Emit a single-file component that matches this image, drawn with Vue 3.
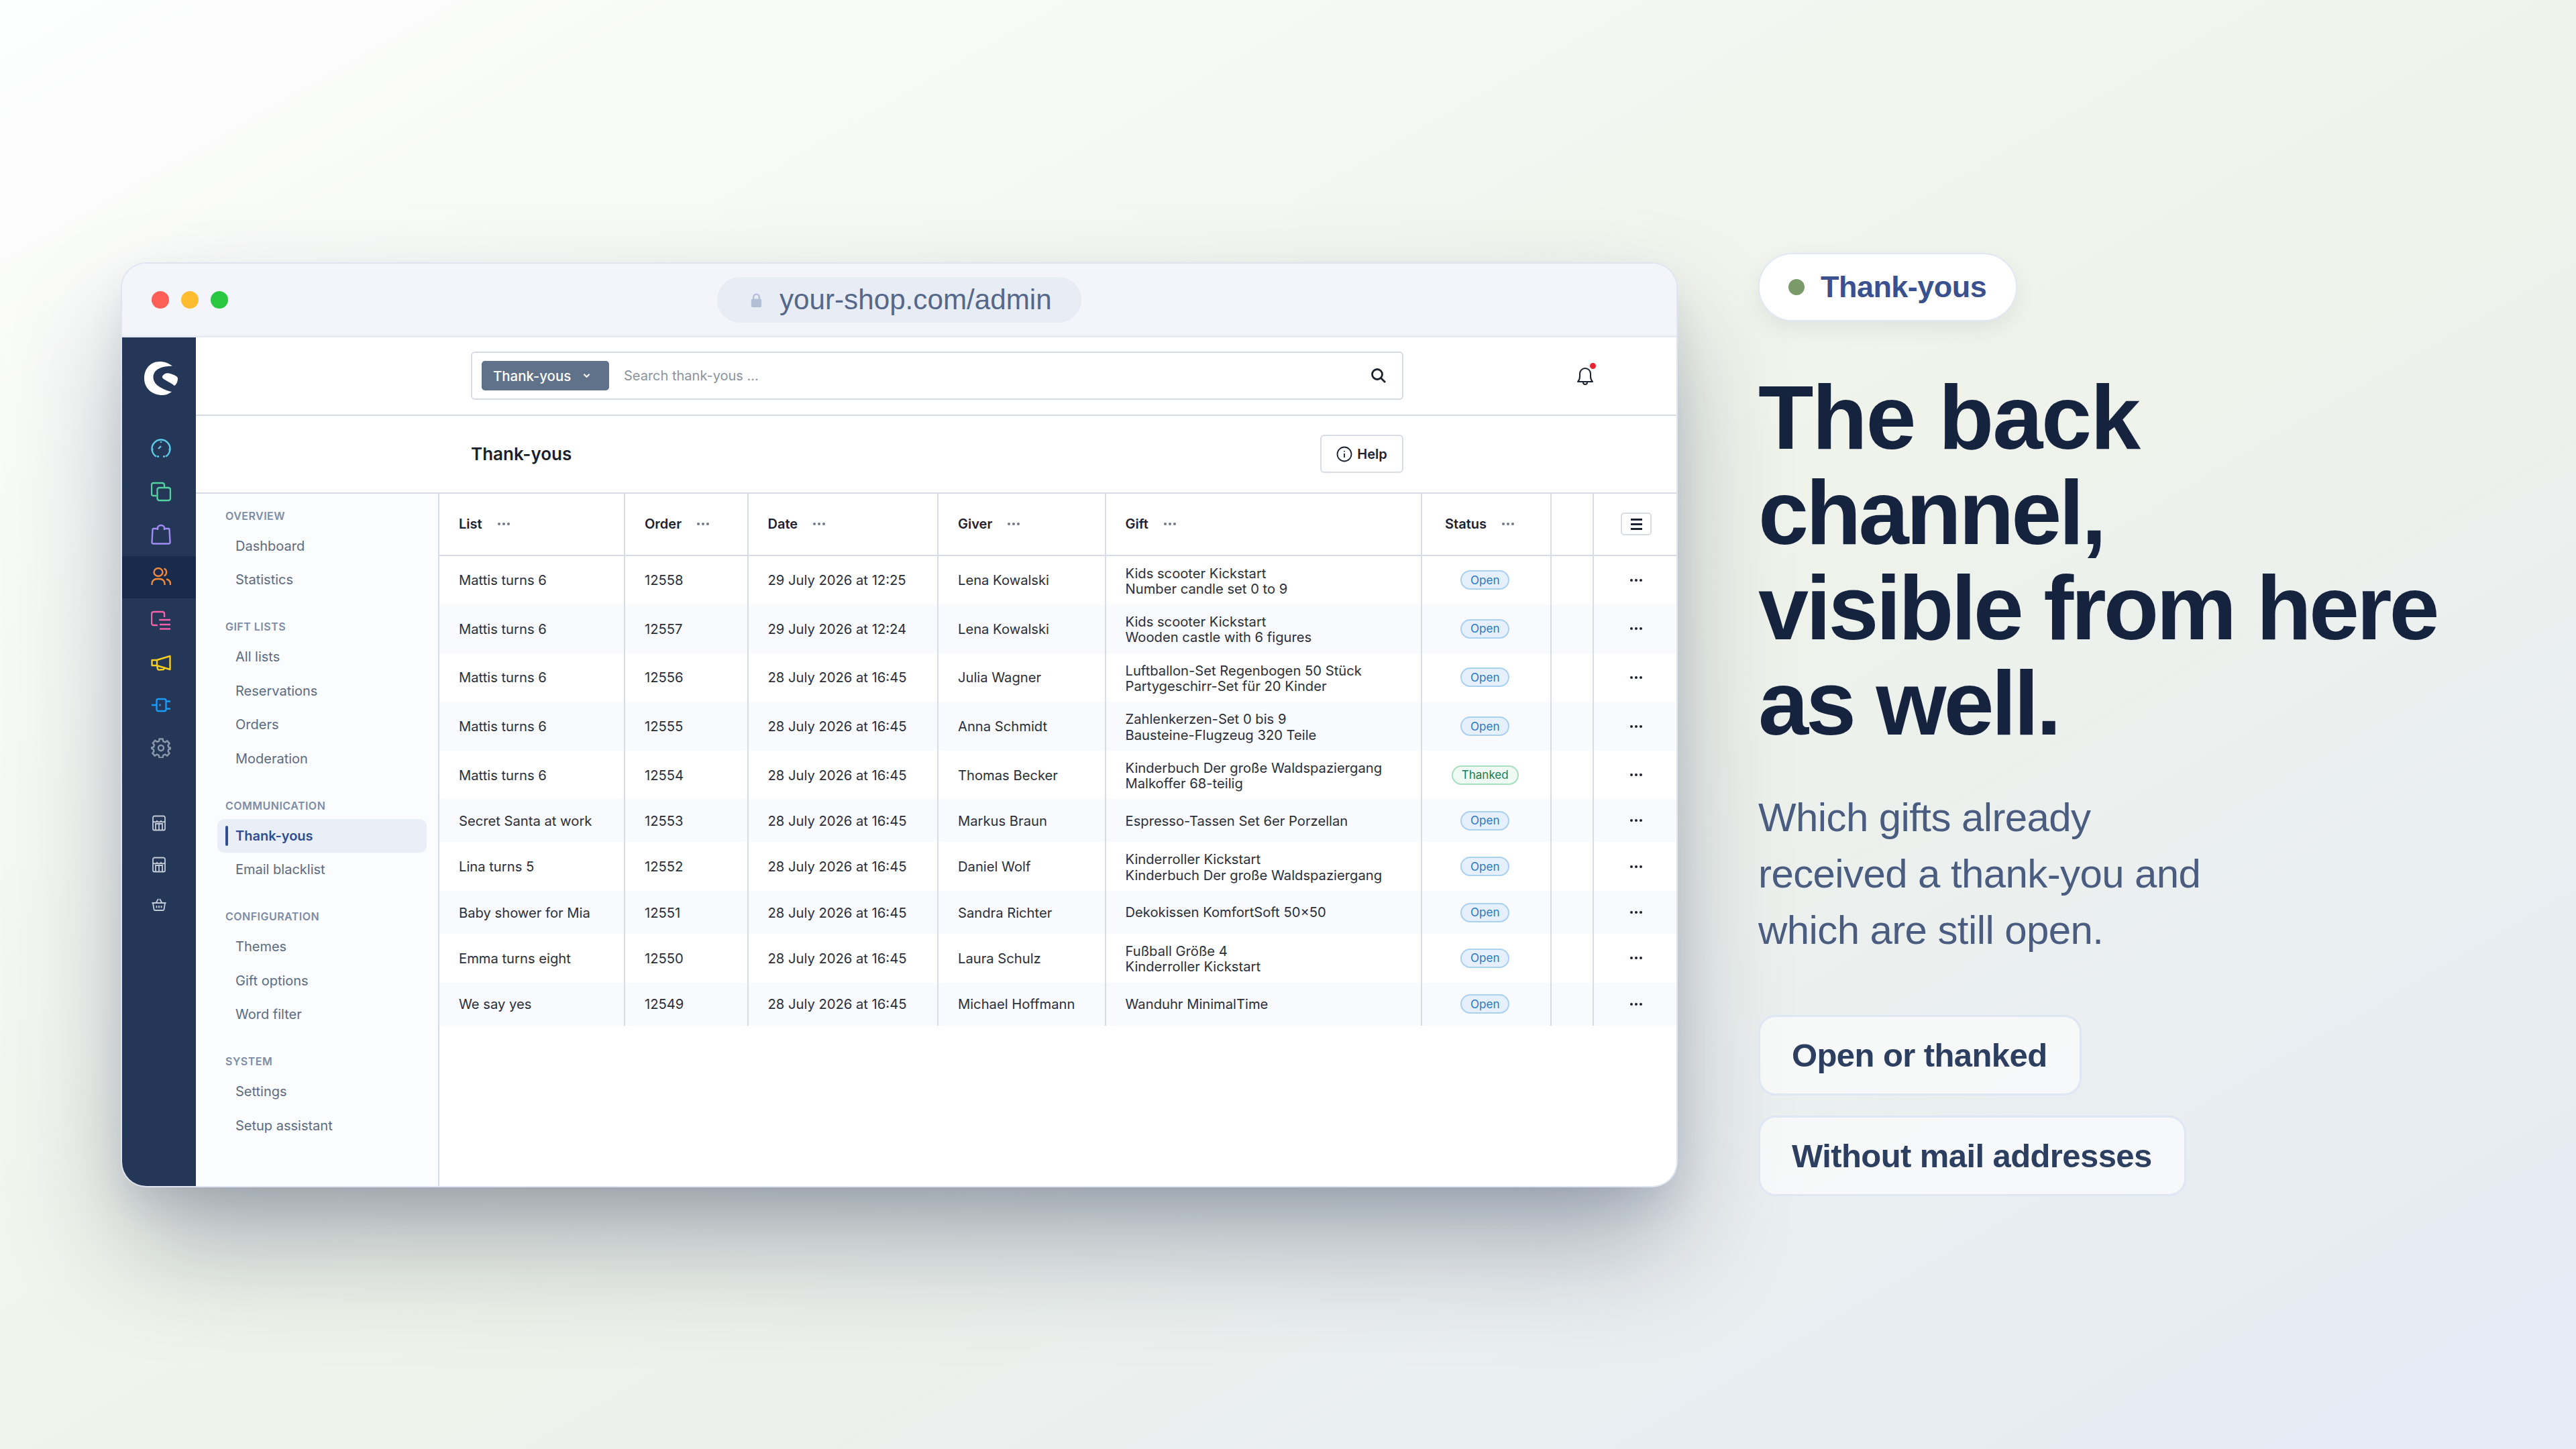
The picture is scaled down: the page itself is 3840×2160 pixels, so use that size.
<script setup>
const navGroups = [
  { title: "Overview", items: ["Dashboard", "Statistics"] },
  { title: "Gift lists", items: ["All lists", "Reservations", "Orders", "Moderation"] },
  { title: "Communication", items: ["Thank-yous", "Email blacklist"] },
  { title: "Configuration", items: ["Themes", "Gift options", "Word filter"] },
  { title: "System", items: ["Settings", "Setup assistant"] },
];

const columns = ["List", "Order", "Date", "Giver", "Gift", "Status"];

const rows = [
  { list: "Mattis turns 6", order: 12558, date: "29 July 2026 at 12:25", giver: "Lena Kowalski", gift: ["Kids scooter Kickstart", "Number candle set 0 to 9"], status: "Open" },
  { list: "Mattis turns 6", order: 12557, date: "29 July 2026 at 12:24", giver: "Lena Kowalski", gift: ["Kids scooter Kickstart", "Wooden castle with 6 figures"], status: "Open" },
  { list: "Mattis turns 6", order: 12556, date: "28 July 2026 at 16:45", giver: "Julia Wagner", gift: ["Luftballon-Set Regenbogen 50 Stück", "Partygeschirr-Set für 20 Kinder"], status: "Open" },
  { list: "Mattis turns 6", order: 12555, date: "28 July 2026 at 16:45", giver: "Anna Schmidt", gift: ["Zahlenkerzen-Set 0 bis 9", "Bausteine-Flugzeug 320 Teile"], status: "Open" },
  { list: "Mattis turns 6", order: 12554, date: "28 July 2026 at 16:45", giver: "Thomas Becker", gift: ["Kinderbuch Der große Waldspaziergang", "Malkoffer 68-teilig"], status: "Thanked" },
  { list: "Secret Santa at work", order: 12553, date: "28 July 2026 at 16:45", giver: "Markus Braun", gift: ["Espresso-Tassen Set 6er Porzellan"], status: "Open" },
  { list: "Lina turns 5", order: 12552, date: "28 July 2026 at 16:45", giver: "Daniel Wolf", gift: ["Kinderroller Kickstart", "Kinderbuch Der große Waldspaziergang"], status: "Open" },
  { list: "Baby shower for Mia", order: 12551, date: "28 July 2026 at 16:45", giver: "Sandra Richter", gift: ["Dekokissen KomfortSoft 50×50"], status: "Open" },
  { list: "Emma turns eight", order: 12550, date: "28 July 2026 at 16:45", giver: "Laura Schulz", gift: ["Fußball Größe 4", "Kinderroller Kickstart"], status: "Open" },
  { list: "We say yes", order: 12549, date: "28 July 2026 at 16:45", giver: "Michael Hoffmann", gift: ["Wanduhr MinimalTime"], status: "Open" },
];
</script>

<template>
  <div class="stage">
    <div class="window">
      <div class="titlebar">
        <div class="lights">
          <span class="light red" />
          <span class="light amber" />
          <span class="light green" />
        </div>
        <div class="url">
          <svg class="lock" viewBox="0 0 18 24" fill="none">
            <path d="M4.5 11V7a4.5 4.5 0 0 1 9 0v4" stroke="#b2bdd6" stroke-width="2.4" />
            <rect x="1" y="10" width="16" height="13" rx="2" fill="#b2bdd6" />
          </svg>
          <span>your-shop.com/admin</span>
        </div>
        <div />
      </div>

      <div class="app">
        <aside class="rail">
          <svg class="logo" viewBox="0 0 70 70" fill="#fff">
            <path d="M52 13.5C44 8 38 7 33 7 19 7 10 18 10 32c0 15 12 25 27 25 5 0 10-2 14-5-9-2-17-5.500-23-11-4.500-5-6-11-3-17 3-6 11-10 27-10.500z" />
            <path d="M37 29c2-4 7-6 12-4 6 2 11 4 11 7 0 5-2 9-5 11-5-4-11-7-16-10-1.500-1-2.500-2.500-2-4z" />
          </svg>

          <div class="rail-nav">
            <div class="rail-item">
              <svg viewBox="0 0 30 30" fill="none" stroke="#5ccbe8">
                <path d="M8 26.500A13.500 13.500 0 1 1 22 26.500" />
                <path d="M12 26.500H9M18 26.500h3M11 15l4-3.800M15 4v2M1.500 16h2M26.500 16h2" />
              </svg>
            </div>
            <div class="rail-item">
              <svg viewBox="0 0 30 30" fill="none" stroke="#52d2a0">
                <path d="M8 21H3.500A2.500 2.500 0 0 1 1 18.500V4.500A2.500 2.500 0 0 1 3.500 2H17a3 3 0 0 1 3 3v4" />
                <rect x="9.500" y="9" width="19.500" height="19" rx="3" />
              </svg>
            </div>
            <div class="rail-item">
              <svg viewBox="0 0 30 30" fill="none" stroke="#a18cf5">
                <path d="M10 6H4a1.500 1.500 0 0 0-1.500 1.500L1.500 26a2 2 0 0 0 2 2.500h23a2 2 0 0 0 2-2.500L27.500 7.500A1.500 1.500 0 0 0 26 6H20" />
                <path d="M10 8V5a5 4 0 0 1 10 0v3" />
              </svg>
            </div>
            <div class="rail-item active">
              <svg viewBox="0 0 30 30" fill="none" stroke="#f58a3c">
                <ellipse cx="11" cy="8" rx="6.500" ry="6" />
                <path d="M1.500 27v-2a7 7 0 0 1 7-7h5a7 7 0 0 1 7 7v2" />
                <path d="M19.500 2.500a6 6 0 0 1 0 11M23 18.500a6.500 6.500 0 0 1 6 6.500v2" />
              </svg>
            </div>
            <div class="rail-item">
              <svg viewBox="0 0 30 30" fill="none" stroke="#f45fa7">
                <path d="M18 3H4a3 3 0 0 0-3 3v14a3 3 0 0 0 3 3h6" />
                <path d="M18 3a3 3 0 0 1 2 3v5M12 15h17M13 22h16M13 28.500h16" />
              </svg>
            </div>
            <div class="rail-item">
              <svg viewBox="0 0 30 30" fill="none" stroke="#f7ce1b" stroke-linejoin="round">
                <path d="M1.500 11v8h7l20 6V5l-20 6z" />
                <path d="M9 11v8M9 19l1 5a2 2 0 0 0 2.500 1.500l6-.5a2 2 0 0 0 1-3" />
              </svg>
            </div>
            <div class="rail-item">
              <svg viewBox="0 0 30 30" fill="none" stroke="#1c9bf5">
                <path d="M1 15h7.500M22 9.500h7M22 20.500h7" />
                <path d="M11 6h9a2.500 2.500 0 0 1 2.500 2.500v13A2.500 2.500 0 0 1 20 24h-9a2.500 2.500 0 0 1-2.500-2.500v-13A2.500 2.500 0 0 1 11 6z" />
                <path d="M13.500 13.500v3" />
              </svg>
            </div>
            <div class="rail-item">
              <svg viewBox="0 0 30 30" fill="none" stroke="#8b98aa">
                <circle cx="15" cy="15" r="4" />
                <path d="M12.500 1.500h5l.8 3.700 2.800 1.200 3.200-2 3.300 3.800-2.100 3 .9 2.800 3.600 1.100v.8l-3.600 1.100-.9 2.800 2.100 3-3.300 3.800-3.200-2-2.800 1.200-.8 3.700h-5l-.8-3.700-2.800-1.200-3.200 2-3.300-3.800 2.100-3-.9-2.800L.5 15.400v-.8l3.600-1.100.9-2.800-2.100-3 3.300-3.800 3.200 2 2.800-1.200z" />
              </svg>
            </div>
          </div>

          <div class="rail-shops">
            <svg v-for="n in 2" :key="n" viewBox="0 0 24 24" fill="none" stroke="#c3cbd8">
              <path d="M3 9V4a2.500 2.500 0 0 1 2.500-2.500h13A2.500 2.500 0 0 1 21 4v5" />
              <path d="M3 9v11.500A2 2 0 0 0 5 22.500h14a2 2 0 0 0 2-2V9" />
              <path d="M3 9c1.500 2 4.500 2 6 0 1.500 2 4.500 2 6 0 1.500 2 4.500 2 6 0" />
              <path d="M7 22.500V13h10v9.500M12 13v9.500" />
            </svg>
            <svg viewBox="0 0 24 24" fill="none" stroke="#c3cbd8">
              <path d="M1.500 11h21M3 11l1.500 9.500a2 2 0 0 0 2 1.500h11a2 2 0 0 0 2-1.500L21 11" />
              <path d="M7.500 11 11 5M16.500 11 13 5M8.500 15v3.500M12 15v3.500M15.500 15v3.500" />
            </svg>
          </div>
        </aside>

        <div class="main">
          <header class="topbar">
            <div class="search">
              <span class="search-tag">
                Thank-yous
                <svg viewBox="0 0 12 8" fill="none" stroke="#fff" stroke-width="2.200">
                  <path d="M1.500 1.500 6 6l4.500-4.500" />
                </svg>
              </span>
              <span class="search-text">Search thank-yous ...</span>
              <svg class="search-icon" viewBox="0 0 24 24" fill="none" stroke="#1c2130" stroke-width="2.800">
                <circle cx="10" cy="10" r="7.500" />
                <path d="m15.500 15.500 6.500 6.500" />
              </svg>
            </div>
            <div class="bell">
              <svg viewBox="0 0 28 32" fill="none" stroke="#1c2130" stroke-width="2">
                <path d="M3 25c2-2 3-4 3-8v-4a8 8 0 0 1 16 0v4c0 4 1 6 3 8z" stroke-linejoin="round" />
                <path d="M11 26a3 3 0 0 0 6 0" />
              </svg>
              <span class="bell-dot" />
            </div>
          </header>

          <section class="pagehead">
            <div class="pagehead-inner">
              <h2>Thank-yous</h2>
              <button class="help">
                <svg viewBox="0 0 24 24" fill="none" stroke="#1c2130" stroke-width="1.800">
                  <circle cx="12" cy="12" r="10.500" />
                  <path d="M12 11v6M12 7v1.500" />
                </svg>
                Help
              </button>
            </div>
          </section>

          <div class="body">
            <nav class="subnav">
              <div v-for="group in navGroups" :key="group.title" class="group">
                <div class="group-title">{{ group.title }}</div>
                <a
                  v-for="item in group.items"
                  :key="item"
                  class="group-item"
                  :class="{ current: item === 'Thank-yous' }"
                >
                  {{ item }}
                </a>
              </div>
            </nav>

            <div class="table">
              <div class="row head">
                <div v-for="col in columns" :key="col" class="cell">
                  {{ col }}
                  <span class="dots"><i /><i /><i /></span>
                </div>
                <div class="cell" />
                <div class="cell end">
                  <span class="columns-btn"><i /><i /><i /></span>
                </div>
              </div>
              <div v-for="row in rows" :key="row.order" class="row">
                <div class="cell">{{ row.list }}</div>
                <div class="cell">{{ row.order }}</div>
                <div class="cell">{{ row.date }}</div>
                <div class="cell">{{ row.giver }}</div>
                <div class="cell gift">
                  <div v-for="line in row.gift" :key="line">{{ line }}</div>
                </div>
                <div class="cell status">
                  <span class="pill" :class="row.status.toLowerCase()">{{ row.status }}</span>
                </div>
                <div class="cell" />
                <div class="cell end">
                  <span class="dots dark"><i /><i /><i /></span>
                </div>
              </div>
            </div>
          </div>
        </div>
      </div>
    </div>

    <div class="copy">
      <div class="eyebrow"><span class="eyebrow-dot" />Thank-yous</div>
      <h1><span class="loose">The back</span><br />channel,<br />visible from here<br />as well.</h1>
      <p>Which gifts already received a thank-you and which are still open.</p>
      <div class="chips">
        <span class="chip">Open or thanked</span>
        <span class="chip">Without mail addresses</span>
      </div>
    </div>
  </div>
</template>

<style>
html,
body {
  margin: 0;
}
</style>

<style scoped>
.stage {
  width: 3840px;
  height: 2160px;
  box-sizing: border-box;
  padding-left: 182px;
  display: flex;
  align-items: center;
  gap: 122px;
  overflow: hidden;
  background: linear-gradient(150deg, #fdfefe 0%, #eff3ea 52%, #e5eaf6 100%);
  font-family: "Liberation Sans", Arial, sans-serif;
}

.window {
  flex: none;
  width: 2317px;
  height: 1375px;
  display: flex;
  flex-direction: column;
  border-radius: 36px;
  overflow: hidden;
  background: #fff;
  box-shadow:
    0 0 0 2px #dfe5f2,
    0 30px 60px -10px rgba(20, 36, 70, 0.12),
    0 90px 170px -10px rgba(20, 36, 70, 0.34);
  font-family: Inter, "Liberation Sans", sans-serif;
}

.titlebar {
  flex: none;
  height: 110px;
  box-sizing: border-box;
  padding: 2px 44px 0;
  display: grid;
  grid-template-columns: 1fr auto 1fr;
  align-items: center;
  background: #f3f5fa;
  border-bottom: 3px solid #e6eaf3;
}

.lights {
  display: flex;
  gap: 18px;
}

.light {
  width: 26px;
  height: 26px;
  border-radius: 50%;
}

.red {
  background: #ff5f57;
}

.amber {
  background: #febc2e;
}

.green {
  background: #28c840;
}

.url {
  width: 543px;
  height: 68px;
  box-sizing: border-box;
  padding-left: 50px;
  display: flex;
  align-items: center;
  gap: 26px;
  border-radius: 34px;
  background: #e8ecf5;
  color: #55688a;
  font-family: "Liberation Sans", Arial, sans-serif;
  font-size: 42.2px;
}

.lock {
  width: 17px;
  height: 23px;
}

.app {
  flex: 1;
  min-height: 0;
  display: flex;
}

.rail {
  flex: none;
  width: 110px;
  background: #243757;
}

.logo {
  display: block;
  width: 70px;
  height: 70px;
  margin: 29px 0 0 23px;
}

.rail-nav {
  margin-top: 36px;
}

.rail-item {
  height: 63.7px;
  padding-left: 6px;
  display: flex;
  align-items: center;
  justify-content: center;
}

.rail-item svg {
  width: 30px;
  height: 30px;
  stroke-width: 2.4;
}

.rail-item.active {
  background: #192b4d;
}

.rail-shops {
  margin-top: 68px;
  display: flex;
  flex-direction: column;
  align-items: center;
}

.rail-shops svg {
  width: 24px;
  height: 24px;
  stroke-width: 1.8;
  margin-bottom: 38px;
}

.rail-shops svg:nth-child(2) {
  margin-bottom: 34px;
}

.main {
  flex: 1;
  min-width: 0;
  display: flex;
  flex-direction: column;
}

.topbar {
  flex: none;
  height: 117px;
  box-sizing: border-box;
  padding-left: 410px;
  display: flex;
  align-items: center;
  border-bottom: 2px solid #d8dce4;
}

.search {
  width: 1390px;
  height: 72px;
  box-sizing: border-box;
  padding: 0 23px 0 14px;
  display: flex;
  align-items: center;
  border: 2px solid #d8dce4;
  border-radius: 6px;
}

.search-tag {
  width: 190px;
  height: 44px;
  box-sizing: border-box;
  padding-left: 17px;
  display: flex;
  align-items: center;
  gap: 18px;
  border-radius: 5px;
  background: #5f7289;
  color: #fff;
  font-size: 20.4px;
  font-weight: 500;
}

.search-tag svg {
  width: 11px;
  height: 8px;
}

.search-text {
  margin-left: 22px;
  flex: 1;
  color: #8a93a0;
  font-size: 20px;
}

.search-icon {
  width: 24px;
  height: 24px;
}

.bell {
  position: relative;
  width: 28px;
  height: 32px;
  margin-left: 257px;
}

.bell svg {
  display: block;
  width: 28px;
  height: 32px;
}

.bell-dot {
  position: absolute;
  top: -3px;
  right: -2px;
  width: 9px;
  height: 9px;
  border-radius: 50%;
  background: #e8222e;
}

.pagehead {
  flex: none;
  height: 116px;
  box-sizing: border-box;
  padding-left: 410px;
  display: flex;
  align-items: center;
  border-bottom: 2px solid #d8dce4;
}

.pagehead-inner {
  width: 1390px;
  display: flex;
  align-items: center;
  justify-content: space-between;
}

h2 {
  margin: 0;
  color: #1a1f2b;
  font-size: 26px;
  font-weight: 600;
}

.help {
  width: 124px;
  height: 57px;
  padding: 0;
  display: flex;
  align-items: center;
  justify-content: center;
  gap: 7px;
  border: 2px solid #d8dce4;
  border-radius: 6px;
  background: #fff;
  color: #1c2130;
  font-family: inherit;
  font-size: 20px;
  font-weight: 600;
}

.help svg {
  width: 24px;
  height: 24px;
}

.body {
  flex: 1;
  min-height: 0;
  display: flex;
}

.subnav {
  flex: none;
  width: 363px;
  box-sizing: border-box;
  padding: 23px 17px 0 32px;
  background: #fbfcfe;
  border-right: 2px solid #d8dce4;
}

.group {
  margin-bottom: 34px;
}

.group-title {
  height: 20px;
  margin-bottom: 10px;
  padding-left: 12px;
  color: #7b8ca6;
  font-size: 16px;
  line-height: 20px;
  font-weight: 600;
  letter-spacing: 0.03em;
  text-transform: uppercase;
}

.group-item {
  display: block;
  height: 50.700px;
  box-sizing: border-box;
  padding-left: 27px;
  color: #5a6b82;
  font-size: 20px;
  line-height: 50.700px;
}

.group-item.current {
  position: relative;
  border-radius: 10px;
  background: #eaeff7;
  color: #2f4d90;
  font-weight: 600;
}

.group-item.current::before {
  content: "";
  position: absolute;
  left: 12px;
  top: 10px;
  bottom: 10px;
  width: 4px;
  border-radius: 2px;
  background: #2f4d90;
}

.table {
  flex: 1;
  min-width: 0;
  color: #2a2f3a;
  font-size: 20.2px;
}

.row {
  display: grid;
  grid-template-columns: 277px 183.500px 283.500px 249.500px 471.500px 192.500px 63.500px 1fr;
}

.row:nth-child(odd):not(.head) {
  background: #f9fafe;
}

.head {
  height: 93px;
  border-bottom: 2px solid #d8dce4;
  box-sizing: border-box;
  font-weight: 600;
  font-size: 20px;
  color: #1c2130;
}

.cell {
  min-height: 64px;
  box-sizing: border-box;
  padding: 0 30px 0 29px;
  display: flex;
  align-items: center;
  border-right: 2px solid #d8dce4;
}

.gift {
  display: block;
  align-self: stretch;
  padding-top: 14px;
  padding-bottom: 12px;
  line-height: 23.300px;
}

.gift:has(> :only-child) {
  display: flex;
  padding-top: 0;
  padding-bottom: 0;
}

.status {
  padding: 0 3px 0 0;
  justify-content: center;
}

.head .cell:nth-child(6) {
  padding-left: 34px;
}

.end {
  padding: 0 0 0 3px;
  justify-content: center;
  border-right: 0;
}

.dots {
  margin-left: 23px;
  display: inline-flex;
  gap: 3px;
}

.dots i {
  width: 4px;
  height: 4px;
  border-radius: 50%;
  background: #6d7684;
}

.dots.dark {
  margin-left: 0;
}

.dots.dark i {
  background: #1c2130;
}

.columns-btn {
  width: 46px;
  height: 34px;
  box-sizing: border-box;
  display: flex;
  flex-direction: column;
  align-items: center;
  justify-content: center;
  gap: 4px;
  border: 2px solid #d8dce4;
  border-radius: 5px;
}

.columns-btn i {
  width: 17px;
  height: 3px;
  background: #1c2130;
}

.pill {
  height: 29px;
  box-sizing: border-box;
  padding: 0 13px;
  display: flex;
  align-items: center;
  border: 2px solid #a9d1f2;
  border-radius: 15px;
  background: #e6f0fc;
  color: #1f78c8;
  font-size: 17px;
}

.pill.thanked {
  border-color: #a7e0bf;
  background: #eefaf3;
  color: #1a7a4c;
}

.copy {
  flex: none;
  width: 1060px;
}

.eyebrow {
  width: fit-content;
  height: 102px;
  box-sizing: border-box;
  padding: 0 44px 0 43px;
  display: flex;
  align-items: center;
  gap: 24px;
  border: 2px solid #e1e7f3;
  border-radius: 51px;
  background: #fff;
  box-shadow: 0 12px 30px rgba(30, 50, 90, 0.08);
  color: #3a5190;
  font-size: 45px;
  font-weight: 700;
  letter-spacing: -0.012em;
}

.eyebrow-dot {
  width: 24px;
  height: 24px;
  border-radius: 50%;
  background: #7a9a6a;
}

h1 {
  margin: 73px 0 0;
  color: #15233f;
  font-size: 135px;
  line-height: 142px;
  font-weight: 700;
  letter-spacing: -0.03em;
}

.loose {
  letter-spacing: -0.016em;
}

p {
  margin: 57px 0 0;
  width: 720px;
  color: #4a5d80;
  font-size: 60px;
  line-height: 84px;
  letter-spacing: -0.01em;
}

.chips {
  margin-top: 84px;
  display: flex;
  flex-direction: column;
  align-items: flex-start;
  gap: 30px;
}

.chip {
  height: 120px;
  box-sizing: border-box;
  padding: 0 48px 0 47px;
  display: flex;
  align-items: center;
  border: 3px solid #dfe6f4;
  border-radius: 26px;
  background: rgba(255, 255, 255, 0.6);
  color: #2d3f60;
  font-size: 49px;
  font-weight: 700;
  letter-spacing: -0.012em;
}
</style>
